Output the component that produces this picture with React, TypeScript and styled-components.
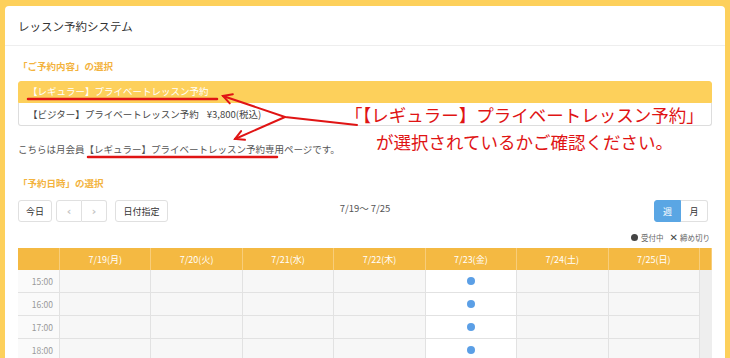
import React, { FC } from 'react'
import styled, { createGlobalStyle } from 'styled-components'

const GlobalStyle = createGlobalStyle`
  html, body {
    margin: 0;
    padding: 0;
    background: #fdd05b;
    overflow: hidden;
  }
  body {
    font-family: "Noto Sans CJK JP", "Noto Sans", sans-serif;
    color: #333;
  }
`

const Page = styled.div`
  position: relative;
  width: 730px;
  height: 358px;
  padding: 6px 5px 0 5px;
  box-sizing: border-box;
  overflow: hidden;
`

const Card = styled.div`
  background: #fff;
  border-radius: 4px;
  height: 400px;
`

const CardHeader = styled.div`
  height: 39px;
  display: flex;
  align-items: center;
  padding-left: 13px;
  font-size: 11.5px;
  color: #333;
  border-bottom: 1px solid #eee;
`

const CardBody = styled.div`
  padding: 0 13px;
`

const SectionTitle = styled.div<{ $top: number }>`
  margin-top: ${(p) => p.$top}px;
  font-size: 9.5px;
  line-height: 14px;
  font-weight: bold;
  color: #f3b33e;
`

const OptionList = styled.div`
  margin-top: 8px;
  display: flex;
  flex-direction: column;
`

const OptionRow = styled.div<{ $selected?: boolean }>`
  display: flex;
  align-items: center;
  padding-left: 9px;
  padding-bottom: ${(p) => (p.$selected ? '2px' : '0')};
  box-sizing: border-box;
  font-size: 9.5px;
  color: ${(p) => (p.$selected ? '#fff' : '#444')};
  background: ${(p) => (p.$selected ? '#fdd05b' : '#fff')};
  border: 1px solid ${(p) => (p.$selected ? '#fdd05b' : '#ddd')};
  border-top: ${(p) => (p.$selected ? '1px solid #fdd05b' : 'none')};
  border-radius: ${(p) => (p.$selected ? '3px 3px 0 0' : '0 0 3px 3px')};
  height: ${(p) => (p.$selected ? '22px' : '23px')};
`

const Price = styled.span`
  margin-left: 8px;
`

const Notice = styled.div`
  margin-top: 16px;
  font-size: 9.5px;
  line-height: 14px;
  color: #555;
`

const Toolbar = styled.div`
  margin-top: 10px;
  height: 22px;
  display: grid;
  grid-template-columns: 1fr auto 1fr;
  align-items: center;
`

const ToolGroup = styled.div<{ $end?: boolean }>`
  display: flex;
  gap: 4px;
  justify-content: ${(p) => (p.$end ? 'flex-end' : 'flex-start')};
`

const Button = styled.div<{ $w: number; $active?: boolean }>`
  width: ${(p) => p.$w}px;
  height: 22px;
  box-sizing: border-box;
  display: flex;
  align-items: center;
  justify-content: center;
  font-size: 9px;
  color: ${(p) => (p.$active ? '#fff' : '#333')};
  background: ${(p) => (p.$active ? '#5aa6e4' : '#fff')};
  border: 1px solid ${(p) => (p.$active ? '#5aa6e4' : '#e0e0e0')};
  border-radius: 3px;
`

const ButtonPair = styled.div`
  display: flex;
  margin-right: 4px;
  & > div:first-child {
    border-radius: 3px 0 0 3px;
  }
  & > div:last-child {
    border-radius: 0 3px 3px 0;
    border-left: none;
  }
`

const Chevron = styled.span`
  color: #c4c4c4;
  font-size: 11px;
  font-weight: bold;
  font-family: "DejaVu Sans", sans-serif;
`

const Range = styled.div`
  font-size: 9.5px;
  color: #555;
  padding-bottom: 6px;
`

const Legend = styled.div`
  margin-top: 10px;
  height: 10px;
  display: flex;
  justify-content: flex-end;
  align-items: center;
  gap: 2px;
  font-size: 7.5px;
  color: #666;
  padding-right: 2px;
`

const LegendDot = styled.span`
  width: 7px;
  height: 7px;
  border-radius: 50%;
  background: #444;
  margin-right: 1px;
`

const LegendCross = styled.span`
  margin-left: 4px;
  font-size: 10px;
  font-weight: bold;
  color: #444;
  font-family: "DejaVu Sans", sans-serif;
`

const Table = styled.div`
  margin-top: 6px;
  display: grid;
  grid-template-columns: 42px repeat(7, 1fr) 12px;
  grid-template-rows: 22px;
  grid-auto-rows: 23px;
`

const HeadCell = styled.div`
  background: #f4b942;
  color: #fff;
  font-size: 9px;
  display: flex;
  align-items: center;
  justify-content: center;
  border-right: 1px solid #f8cd7a;
  &:last-child {
    border-right: none;
  }
`

const TimeCell = styled.div`
  background: #fafafa;
  border-bottom: 1px solid #e2e2e2;
  border-right: 1px solid #e2e2e2;
  font-size: 8.5px;
  color: #999;
  display: flex;
  align-items: center;
  justify-content: flex-end;
  padding-right: 6px;
`

const SlotCell = styled.div<{ $open?: boolean }>`
  background: ${(p) => (p.$open ? '#fff' : '#f7f7f7')};
  border-bottom: 1px solid #e2e2e2;
  border-right: 1px solid #e2e2e2;
  display: flex;
  align-items: center;
  justify-content: center;
`

const ScrollCell = styled.div`
  background: #eeeeee;
`

const OpenDot = styled.span`
  width: 8px;
  height: 8px;
  border-radius: 50%;
  background: #5b9fe6;
`

const Annotations = styled.svg`
  position: absolute;
  left: 0;
  top: 0;
  pointer-events: none;
`

const Callout = styled.div`
  position: absolute;
  left: 345px;
  top: 101px;
  font-size: 17.5px;
  line-height: 27px;
  color: #e01414;
  white-space: nowrap;
`

const CalloutLine = styled.div<{ $indent: number }>`
  padding-left: ${(p) => p.$indent}px;
`

const days = ['7/19(月)', '7/20(火)', '7/21(水)', '7/22(木)', '7/23(金)', '7/24(土)', '7/25(日)']
const times = ['15:00', '16:00', '17:00', '18:00']

const arrowHead = (fx: number, fy: number, tx: number, ty: number) => {
  const a = Math.atan2(ty - fy, tx - fx)
  const len = 10
  const p1 = [tx - len * Math.cos(a - 0.5), ty - len * Math.sin(a - 0.5)]
  const p2 = [tx - len * Math.cos(a + 0.5), ty - len * Math.sin(a + 0.5)]
  return `M${p1[0]},${p1[1]} L${tx},${ty} L${p2[0]},${p2[1]}`
}

const App: FC = () => {
  return (
    <Page>
      <GlobalStyle />
      <Card>
        <CardHeader>レッスン予約システム</CardHeader>
        <CardBody>
          <SectionTitle $top={13}>「ご予約内容」の選択</SectionTitle>
          <OptionList>
            <OptionRow $selected>【レギュラー】プライベートレッスン予約</OptionRow>
            <OptionRow>
              【ビジター】プライベートレッスン予約<Price>¥3,800(税込)</Price>
            </OptionRow>
          </OptionList>
          <Notice>こちらは月会員【レギュラー】プライベートレッスン予約専用ページです。</Notice>

          <SectionTitle $top={20}>「予約日時」の選択</SectionTitle>
          <Toolbar>
            <ToolGroup>
              <Button $w={34}>今日</Button>
              <ButtonPair>
                <Button $w={26}><Chevron>‹</Chevron></Button>
                <Button $w={25}><Chevron>›</Chevron></Button>
              </ButtonPair>
              <Button $w={53}>日付指定</Button>
            </ToolGroup>
            <Range>7/19〜 7/25</Range>
            <ToolGroup $end>
              <ButtonPair>
                <Button $w={27} $active>週</Button>
                <Button $w={27}>月</Button>
              </ButtonPair>
            </ToolGroup>
          </Toolbar>
          <Legend>
            <LegendDot />受付中<LegendCross>✕</LegendCross>締め切り
          </Legend>
          <Table>
            <HeadCell />
            {days.map((d) => (
              <HeadCell key={d}>{d}</HeadCell>
            ))}
            <HeadCell />
            {times.map((t) => (
              <React.Fragment key={t}>
                <TimeCell>{t}</TimeCell>
                {days.map((d, i) => (
                  <SlotCell key={d} $open={i === 4}>
                    {i === 4 && <OpenDot />}
                  </SlotCell>
                ))}
                <ScrollCell />
              </React.Fragment>
            ))}
          </Table>
        </CardBody>
      </Card>

      <Annotations width={730} height={358}>
        <g stroke="#e01414" strokeWidth={2.5} fill="none" strokeLinecap="round">
          <line x1={28} y1={99} x2={217} y2={99} />
          <line x1={88} y1={157} x2={277} y2={157} />
          <polyline points="357,125 285,117 223,96" strokeWidth={2} />
          <line x1={285} y1={117} x2={235} y2={139} strokeWidth={2} />
          <path d={arrowHead(285, 117, 223, 96)} strokeWidth={2} />
          <path d={arrowHead(285, 117, 235, 139)} strokeWidth={2} />
        </g>
      </Annotations>
      <Callout>
        <CalloutLine $indent={0}>「【レギュラー】プライベートレッスン予約」</CalloutLine>
        <CalloutLine $indent={31}>が選択されているかご確認ください。</CalloutLine>
      </Callout>
    </Page>
  )
}

export default App
